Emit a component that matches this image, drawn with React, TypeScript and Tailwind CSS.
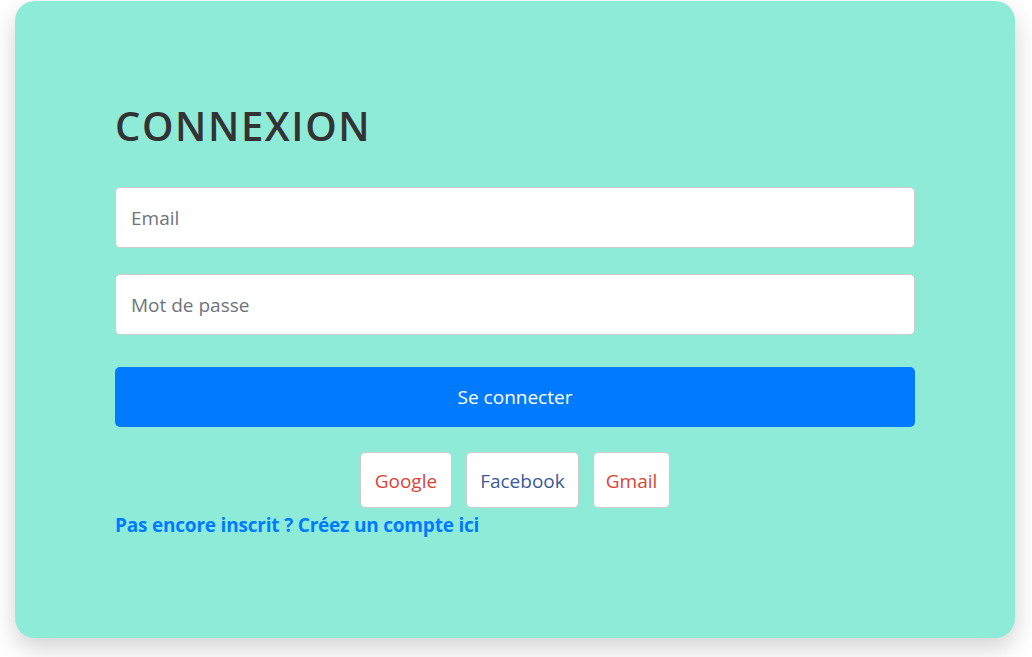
import React from "react";

export default function App() {
  return (
    <div className="min-h-[657px] bg-white pt-px" style={{ fontFamily: '"Open Sans", "Noto Sans", sans-serif' }}>
      <div className="ml-[15px] w-[1000px] rounded-[20px] bg-[#8eebd8] px-[100px] pt-[100px] pb-[98px] shadow-[0_10px_25px_rgba(0,0,0,0.18)]">
        <h1 className="text-[40px] leading-[50px] font-semibold tracking-[1.6px] text-[#333333]">CONNEXION</h1>
        <div className="mt-[36px] flex flex-col gap-[26px]">
          <input
            type="text"
            placeholder="Email"
            className="h-[61px] w-full rounded-[5px] border border-[#cccccc] bg-white px-[15px] text-[19px] text-[#333] placeholder:text-[#6c757d] outline-none"
          />
          <input
            type="password"
            placeholder="Mot de passe"
            className="h-[61px] w-full rounded-[5px] border border-[#cccccc] bg-white px-[15px] text-[19px] text-[#333] placeholder:text-[#6c757d] outline-none"
          />
        </div>
        <button className="mt-[32px] flex h-[60px] w-full items-center justify-center rounded-[5px] bg-[#007bff] text-[19px] text-white">
          Se connecter
        </button>
        <div className="mt-[25px] flex justify-center gap-[14px]">
          <button className="h-[56px] rounded-[5px] border border-[#cccccc] bg-white px-[14px] pt-[3px] text-[19px] text-[#db4437]">Google</button>
          <button className="h-[56px] rounded-[5px] border border-[#cccccc] bg-white px-[13px] pt-[3px] text-[19px] text-[#3b5998]">Facebook</button>
          <button className="h-[56px] rounded-[5px] border border-[#cccccc] bg-white px-[12px] pt-[3px] text-[19px] text-[#db4437]">Gmail</button>
        </div>
        <a href="#" className="block pt-[2px] text-[19px] leading-[30px] font-bold tracking-[-0.2px] text-[#007bff]">
          Pas encore inscrit ? Créez un compte ici
        </a>
      </div>
    </div>
  );
}
